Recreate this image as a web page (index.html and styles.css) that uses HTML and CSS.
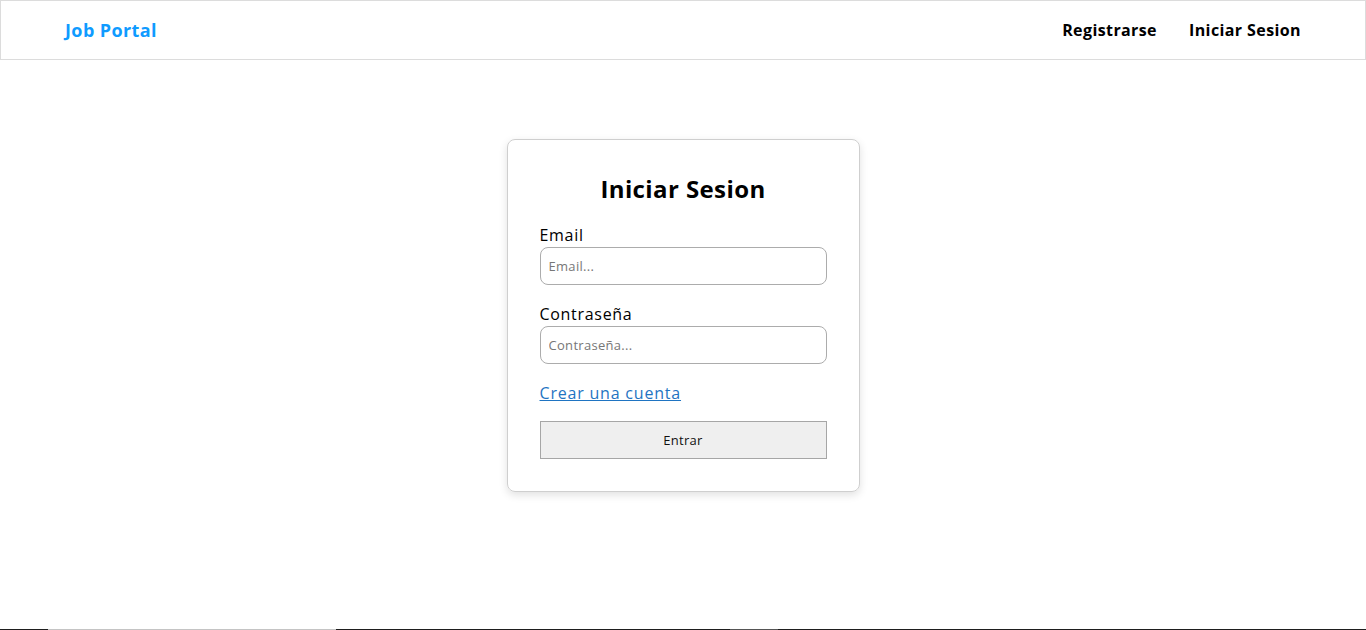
FILE: index.html
```html
<!DOCTYPE html>
<html lang="es">
<head>
<meta charset="utf-8">
<title>Job Portal</title>
<link rel="stylesheet" href="styles.css">
</head>
<body>
<div class="page">
  <header class="navbar">
    <a class="brand" href="#">Job Portal</a>
    <nav class="nav-links">
      <a href="#">Registrarse</a>
      <a href="#">Iniciar Sesion</a>
    </nav>
  </header>
  <main class="main">
    <form class="card">
      <h1 class="card-title">Iniciar Sesion</h1>
      <div class="field">
        <label for="email">Email</label>
        <input id="email" type="email" placeholder="Email...">
      </div>
      <div class="field">
        <label for="pass">Contraseña</label>
        <input id="pass" type="password" placeholder="Contraseña...">
      </div>
      <a class="create-link" href="#">Crear una cuenta</a>
      <button class="btn" type="button">Entrar</button>
    </form>
  </main>
  <footer class="footer">
    <span class="seg dark s1"></span>
    <span class="seg light s2"></span>
    <span class="seg dark s3"></span>
    <span class="seg mid s4"></span>
    <span class="seg dark s5"></span>
  </footer>
</div>
</body>
</html>
```
FILE: styles.css
```css
* { box-sizing: border-box; }
html, body { margin: 0; padding: 0; background: #fff; }
body {
  font-family: "Open Sans", "Liberation Sans", sans-serif;
  color: #000;
}
.page {
  height: 630px;
  display: flex;
  flex-direction: column;
  overflow: hidden;
}
.navbar {
  height: 60px;
  border: 1px solid #dcdcdc;
  display: flex;
  align-items: center;
  justify-content: space-between;
  padding: 0 64px 0 64px;
  flex-shrink: 0;
}
.brand {
  color: #0f9bff;
  font-weight: 700;
  font-size: 18px;
  text-decoration: none;
  letter-spacing: 0.4px;
}
.nav-links { display: flex; gap: 32px; }
.nav-links a {
  color: #000;
  font-weight: 700;
  font-size: 16px;
  text-decoration: none;
  letter-spacing: 0.4px;
}
.main {
  flex: 1;
  display: flex;
  justify-content: center;
  align-items: flex-start;
  padding-top: 79px;
}
.card {
  width: 353px;
  border: 1px solid #cfcfcf;
  border-radius: 8px;
  box-shadow: 0 3px 8px rgba(0,0,0,0.12);
  padding: 32px;
  display: flex;
  flex-direction: column;
}
.card-title {
  margin: 0 0 17px 0;
  text-align: center;
  font-size: 24px;
  font-weight: 700;
  line-height: 34px;
  letter-spacing: 0.4px;
}
.field { display: flex; flex-direction: column; margin-bottom: 17px; }
.field label { font-size: 16px; line-height: 24px; letter-spacing: 0.7px; }
.field input {
  height: 38px;
  border: 1px solid #acacac;
  border-radius: 8px;
  padding: 0 8px;
  font-family: inherit;
  font-size: 13px;
  letter-spacing: 0.3px;
  outline: none;
}
.field input::placeholder { color: #777; }
.create-link {
  color: #1f74c2;
  font-size: 16px;
  line-height: 24px;
  letter-spacing: 0.8px;
  text-decoration: underline;
  align-self: flex-start;
  margin-bottom: 16px;
}
.btn {
  height: 38px;
  background: #efefef;
  border: 1px solid #a6a6a6;
  font-family: inherit;
  font-size: 13px;
  letter-spacing: 0.3px;
  color: #111;
}
.footer { height: 1px; display: flex; flex-shrink: 0; }
.seg { height: 1px; }
.dark { background: #1e1e1e; }
.light { background: #c4c4c4; }
.mid { background: #555; }
.s1 { width: 48px; }
.s2 { width: 288px; }
.s3 { width: 394px; }
.s4 { width: 48px; }
.s5 { flex: 1; }
```
